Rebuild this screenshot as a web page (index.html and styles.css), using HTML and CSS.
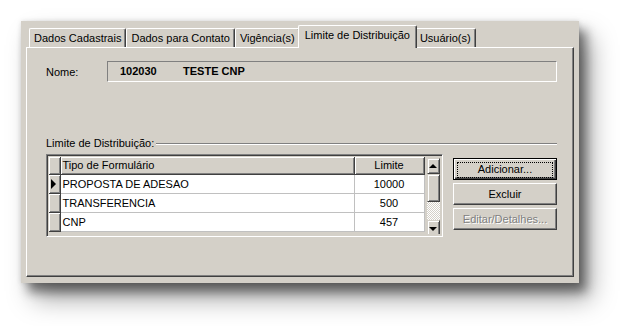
FILE: index.html
```html
<!DOCTYPE html>
<html lang="pt-BR">
<head>
  <meta charset="UTF-8">
  <title>Limite de Distribuição</title>
  <link rel="stylesheet" href="styles.css">
</head>
<body>

  <div class="dialog">
    <div class="tabs">
      <div class="tab">Dados Cadastrais</div>
      <div class="tab">Dados para Contato</div>
      <div class="tab">Vigência(s)</div>
      <div class="tab active">Limite de Distribuição</div>
      <div class="tab">Usuário(s)</div>
    </div>

    <div class="page">
      <div class="field-row">
        <div class="field-label">Nome:</div>
        <div class="readonly-box">
          <span class="code">102030</span>
          <span>TESTE CNP</span>
        </div>
      </div>

      <div class="group-title">
        <span>Limite de Distribuição:</span>
        <div class="etched"></div>
      </div>

      <div class="limits">
        <div class="grid">
          <table class="grid-table">
            <thead>
              <tr>
                <th class="indicator"></th>
                <th class="col-tipo">Tipo de Formulário</th>
                <th class="col-limite">Limite</th>
              </tr>
            </thead>
            <tbody>
              <tr>
                <td class="indicator"><span class="current-row"></span></td>
                <td>PROPOSTA DE ADESAO</td>
                <td class="num">10000</td>
              </tr>
              <tr>
                <td class="indicator"></td>
                <td>TRANSFERENCIA</td>
                <td class="num">500</td>
              </tr>
              <tr>
                <td class="indicator"></td>
                <td>CNP</td>
                <td class="num">457</td>
              </tr>
            </tbody>
          </table>

          <div class="scrollbar">
            <div class="sb-btn"><span class="arrow-up"></span></div>
            <div class="sb-thumb"></div>
            <div class="sb-track"></div>
            <div class="sb-btn sb-down"><span class="arrow-down"></span></div>
          </div>
        </div>

        <div class="actions">
          <button class="btn default"><span class="focus">Adicionar...</span></button>
          <button class="btn">Excluir</button>
          <button class="btn" disabled>Editar/Detalhes...</button>
        </div>
      </div>
    </div>
  </div>

</body>
</html>
```

FILE: styles.css
```css
html {
  overflow: hidden;
}

body {
  margin: 0;
  padding: 0;
  min-height: 326px;
  background: #fff;
  font-family: "Liberation Sans", Arial, sans-serif;
  font-size: 11px;
  color: #000;
}

.dialog {
  display: flex;
  flex-direction: column;
  box-sizing: border-box;
  width: 558px;
  height: 262px;
  margin: 21px 0 0 21px;
  padding: 4px 5px 6px 5px;
  background: #d4d0c8;
  box-shadow: 0 0 5px rgba(0, 0, 0, 0.12), 7px 9px 10px rgba(0, 0, 0, 0.45), 12px 16px 24px rgba(0, 0, 0, 0.35);
}

/* tab strip */
.tabs {
  display: flex;
  align-items: flex-end;
  height: 22px;
  padding-left: 3px;
}

.tab {
  box-sizing: border-box;
  height: 19px;
  padding: 0 4px 0 4px;
  line-height: 18px;
  white-space: nowrap;
  background: #d4d0c8;
  border-top: 1px solid #fff;
  border-left: 1px solid #fff;
  border-right: 1px solid #404040;
  border-radius: 2px 2px 0 0;
  box-shadow: inset -1px 0 #808080;
}

.tab.active {
  position: relative;
  z-index: 1;
  height: 23px;
  margin: 0 -2px -1px -2px;
  padding: 0 6px 1px 6px;
  line-height: 19px;
}

.page {
  flex: 1;
  box-sizing: border-box;
  padding: 0 16px 0 19px;
  border: 1px solid;
  border-color: #fff #404040 #404040 #fff;
  box-shadow: inset -1px -1px #808080;
}

/* nome */
.field-row {
  display: flex;
  align-items: center;
  margin-top: 13px;
}

.field-label {
  width: 61px;
}

.readonly-box {
  flex: 1;
  box-sizing: border-box;
  height: 21px;
  padding-left: 12px;
  line-height: 19px;
  font-weight: bold;
  border: 1px solid;
  border-color: #808080 #fff #fff #808080;
}

.readonly-box .code {
  display: inline-block;
  width: 60px;
}

/* group */
.group-title {
  display: flex;
  align-items: center;
  margin-top: 55px;
  line-height: 13px;
}

.etched {
  flex: 1;
  margin-left: 2px;
  border-top: 1px solid #808080;
  border-bottom: 1px solid #fff;
}

.limits {
  display: flex;
  align-items: flex-start;
  margin-top: 4px;
}

/* grid */
.grid {
  display: flex;
  align-items: flex-start;
  box-sizing: border-box;
  width: 397px;
  height: 83px;
  padding: 2px 2px 0 2px;
  border: 1px solid;
  border-color: #808080 #fff #fff #808080;
  box-shadow: inset 1px 1px #404040, inset -1px -1px #d4d0c8;
}

.grid-table {
  width: 375px;
  border-collapse: collapse;
  table-layout: fixed;
}

.grid-table th,
.grid-table td {
  box-sizing: border-box;
  padding: 0 2px;
  font-weight: normal;
  text-align: left;
  white-space: nowrap;
  overflow: hidden;
}

.grid-table th {
  height: 17px;
  background: #d4d0c8;
  border-right: 1px solid #404040;
  border-bottom: 1px solid #404040;
  box-shadow: inset 1px 1px #fff, inset -1px -1px #808080;
}

.grid-table td {
  height: 19px;
  padding-top: 1px;
  background: #fff;
  border-right: 1px solid #c0c0c0;
  border-bottom: 1px solid #c0c0c0;
}

.grid-table .indicator {
  width: 11px;
  padding: 0;
  background: #d4d0c8;
  border-right: 1px solid #404040;
  border-bottom: 1px solid #404040;
  box-shadow: inset 1px 1px #fff, inset -1px -1px #808080;
}

.col-tipo {
  width: 294px;
}

.col-limite {
  width: 70px;
}

.grid-table th.col-limite,
.grid-table td.num {
  text-align: center;
}

.current-row {
  display: block;
  width: 0;
  height: 0;
  margin-left: 2px;
  border-top: 5px solid transparent;
  border-bottom: 5px solid transparent;
  border-left: 5px solid #000;
}

/* scrollbar */
.scrollbar {
  display: flex;
  flex-direction: column;
  width: 16px;
  height: 76px;
  margin-left: 2px;
  margin-top: 1px;
  overflow: hidden;
}

.sb-btn,
.sb-thumb {
  box-sizing: border-box;
  flex: none;
  display: flex;
  align-items: center;
  justify-content: center;
  background: #d4d0c8;
  border: 1px solid;
  border-color: #d4d0c8 #404040 #404040 #d4d0c8;
  box-shadow: inset 1px 1px #fff, inset -1px -1px #808080;
}

.sb-btn {
  height: 16px;
}

.sb-thumb {
  height: 28px;
}

.sb-track {
  flex: none;
  height: 18px;
  background-color: #fff;
  background-image:
    linear-gradient(45deg, #d4d0c8 25%, transparent 25%, transparent 75%, #d4d0c8 75%),
    linear-gradient(45deg, #d4d0c8 25%, transparent 25%, transparent 75%, #d4d0c8 75%);
  background-size: 2px 2px;
  background-position: 0 0, 1px 1px;
}

.arrow-up {
  width: 0;
  height: 0;
  border-left: 4px solid transparent;
  border-right: 4px solid transparent;
  border-bottom: 4px solid #000;
}

.arrow-down {
  width: 0;
  height: 0;
  margin-top: 1px;
  border-left: 4px solid transparent;
  border-right: 4px solid transparent;
  border-top: 4px solid #000;
}

/* buttons */
.actions {
  display: flex;
  flex-direction: column;
  gap: 3px;
  margin-left: 10px;
  margin-top: 4px;
}

.btn {
  box-sizing: border-box;
  width: 104px;
  height: 22px;
  padding: 0;
  font-family: inherit;
  font-size: 11px;
  color: #000;
  background: #d4d0c8;
  border: 1px solid;
  border-color: #fff #404040 #404040 #fff;
  box-shadow: inset -1px -1px #808080;
}

.btn.default {
  border: 1px solid #000;
  padding: 3px;
  box-shadow: inset 1px 1px #fff, inset -1px -1px #404040, inset -2px -2px #808080;
}

.btn .focus {
  display: block;
  height: 14px;
  line-height: 13px;
  border: 1px dotted #000;
}

.btn:disabled {
  color: #808080;
  text-shadow: 1px 1px #fff;
}
```
